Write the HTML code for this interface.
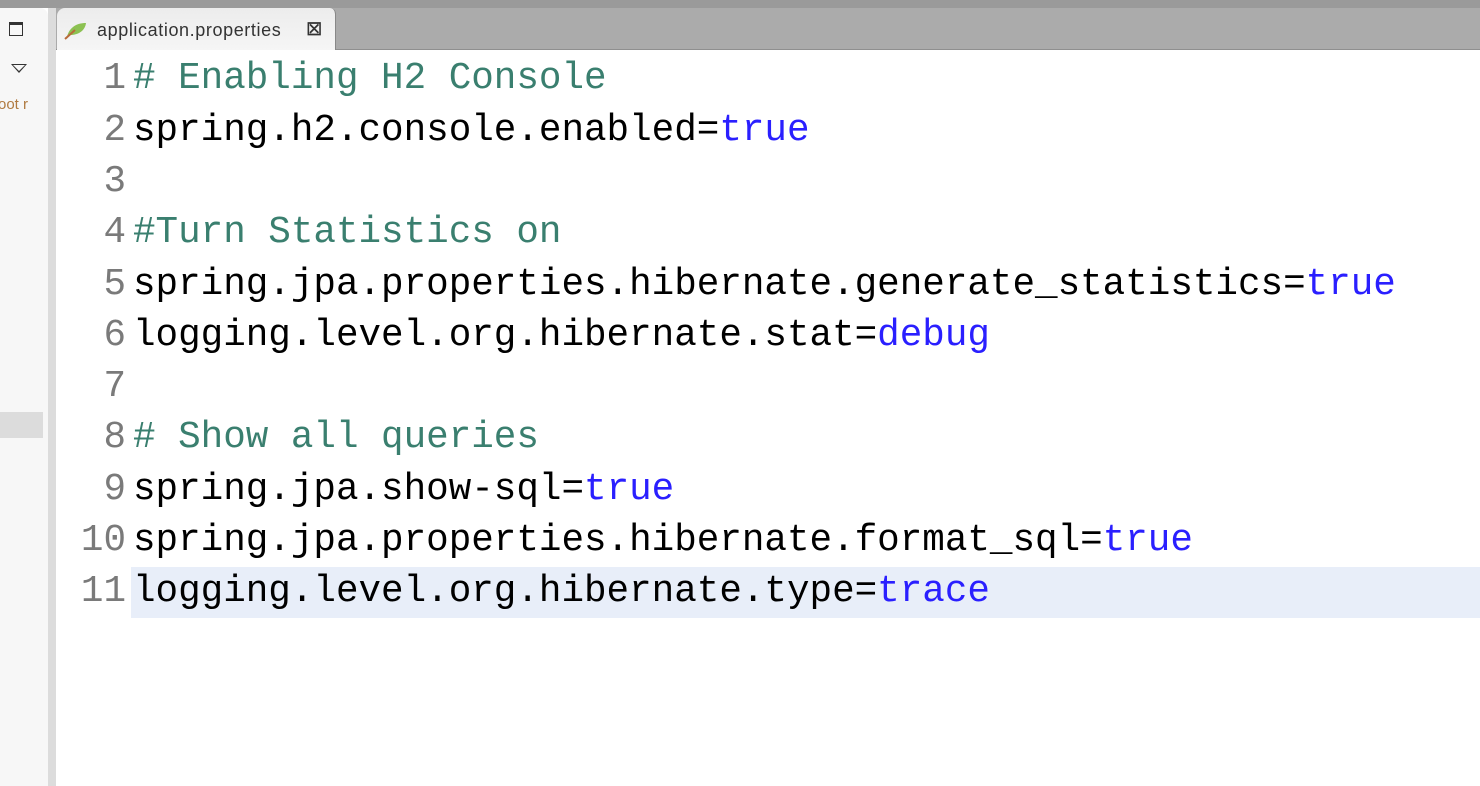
<!DOCTYPE html>
<html><head><meta charset="utf-8"><style>
*{margin:0;padding:0;box-sizing:border-box}
body{width:1480px;height:786px;overflow:hidden;background:#fff;position:relative;font-family:"Liberation Sans",sans-serif}
.topstrip{position:absolute;left:0;top:0;width:1480px;height:8px;background:#9a9a9a}
.left{position:absolute;left:0;top:8px;width:48px;height:778px;background:#f7f7f7;border-top-right-radius:8px}
.lborder{position:absolute;left:48px;top:8px;width:8px;height:778px;background:#dcdcdc}
.tabbar{position:absolute;left:56px;top:8px;width:1424px;height:42px;background:#ababab;border-bottom:1px solid #8f8f8f}
.tab{position:absolute;left:57px;top:8px;width:279px;height:43px;background:linear-gradient(#ececec,#f6f6f6);border-top-left-radius:8px;border-top-right-radius:6px;border-right:1px solid #888}
.tab span{position:absolute;left:40px;top:12px;font-size:18px;letter-spacing:0.6px;color:#333}
.tab .x{position:absolute;left:250px;top:11px;font-size:18px;color:#333;font-weight:bold;letter-spacing:0}
.lines{position:absolute;left:56px;top:50px;width:1424px;height:736px;background:#fff}
.hl{position:absolute;left:131px;top:567px;width:1349px;height:51px;background:#e8eef9}
.row{position:absolute;left:0;height:51px;font-family:"Liberation Mono",monospace;font-size:37.6px;line-height:51px;white-space:pre}
.n{position:absolute;width:126px;text-align:right;color:#7a7a7a}
.t{position:absolute;left:133px;color:#000}
.c{color:#3a7f6f}.v{color:#2a1fff}
</style></head><body>
<div class="topstrip"></div>
<div class="left">
<div style="position:absolute;left:9px;top:14px;width:14px;height:14px;border:1.5px solid #333;border-top-width:3px"></div>
<div style="position:absolute;left:11px;top:56px;width:0;height:0;border-left:8px solid transparent;border-right:8px solid transparent;border-top:9px solid #333"></div>
<div style="position:absolute;left:13px;top:57px;width:0;height:0;border-left:6px solid transparent;border-right:6px solid transparent;border-top:6px solid #f7f7f7"></div>
<div style="position:absolute;left:-2px;top:88px;font-size:15px;color:#b07a40">oot r</div>
<div style="position:absolute;left:0;top:404px;width:43px;height:26px;background:#dcdcdc"></div>
</div>
<div class="lborder"></div>
<div class="tabbar"></div>
<div class="tab">
<svg style="position:absolute;left:6px;top:12px" width="26" height="20" viewBox="0 0 26 20"><path d="M4 17 C6 8 13 3 23 3 C22 11 15 15 7 15 Z" fill="#8cc152"/><path d="M2 19 L12 10" stroke="#b86a3a" stroke-width="2"/></svg>
<span>application.properties</span><span class="x">⮽</span>
</div>
<div class="lines"></div>
<div class="hl"></div>
<div class="row" style="top:54px"><span class="n">1</span><span class="t c"># Enabling H2 Console</span></div>
<div class="row" style="top:106px"><span class="n">2</span><span class="t">spring.h2.console.enabled=<span class="v">true</span></span></div>
<div class="row" style="top:157px"><span class="n">3</span></div>
<div class="row" style="top:208px"><span class="n">4</span><span class="t c">#Turn Statistics on</span></div>
<div class="row" style="top:260px"><span class="n">5</span><span class="t">spring.jpa.properties.hibernate.generate_statistics=<span class="v">true</span></span></div>
<div class="row" style="top:311px"><span class="n">6</span><span class="t">logging.level.org.hibernate.stat=<span class="v">debug</span></span></div>
<div class="row" style="top:362px"><span class="n">7</span></div>
<div class="row" style="top:413px"><span class="n">8</span><span class="t c"># Show all queries</span></div>
<div class="row" style="top:465px"><span class="n">9</span><span class="t">spring.jpa.show-sql=<span class="v">true</span></span></div>
<div class="row" style="top:516px"><span class="n">10</span><span class="t">spring.jpa.properties.hibernate.format_sql=<span class="v">true</span></span></div>
<div class="row" style="top:567px"><span class="n">11</span><span class="t">logging.level.org.hibernate.type=<span class="v">trace</span></span></div>
</body></html>
